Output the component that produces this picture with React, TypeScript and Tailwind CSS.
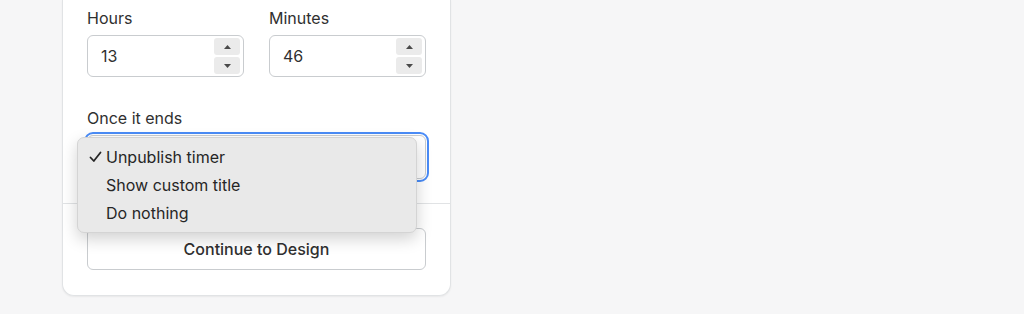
import React from 'react';

const font = { fontFamily: 'Inter, "Noto Sans", "Liberation Sans", sans-serif' };

function Spinner() {
  return (
    <div className="flex flex-col gap-[2px] pr-[3px]">
      <div className="flex h-[17px] w-[26px] items-center justify-center rounded-[3px] bg-[#ebebeb]">
        <svg width="7" height="4" viewBox="0 0 7 4">
          <path d="M0 4 L3.5 0 L7 4 Z" fill="#4a4a4a" />
        </svg>
      </div>
      <div className="flex h-[17px] w-[26px] items-center justify-center rounded-[3px] bg-[#ebebeb]">
        <svg width="7" height="4" viewBox="0 0 7 4">
          <path d="M0 0 L3.5 4 L7 0 Z" fill="#4a4a4a" />
        </svg>
      </div>
    </div>
  );
}

function NumberField({ label, value }: { label: string; value: string }) {
  return (
    <div>
      <div className="mb-[7px] text-[16px] leading-[20px] text-[#303030]">{label}</div>
      <div className="flex h-[42px] items-center justify-between rounded-[6px] border border-[#c9cccf] bg-white">
        <span className="pl-[13px] text-[16px] text-[#303030]">{value}</span>
        <Spinner />
      </div>
    </div>
  );
}

const options = ['Unpublish timer', 'Show custom title', 'Do nothing'];

export default function App() {
  return (
    <div className="min-h-[314px] bg-[#f6f6f7] pl-[62px]" style={font}>
      <div className="w-[389px] rounded-b-[12px] border border-t-0 border-[#e1e3e5] bg-white shadow-[0_1px_2px_rgba(0,0,0,0.06)]">
        <div className="px-[24px] pb-[24px] pt-[8px]">
          <div className="grid grid-cols-2 gap-[25px]">
            <NumberField label="Hours" value="13" />
            <NumberField label="Minutes" value="46" />
          </div>

          <div className="mt-[31px] mb-[7px] text-[16px] leading-[20px] text-[#303030]">Once it ends</div>
          <div className="relative">
            <div className="h-[44px] rounded-[6px] border border-[#c9cccf] bg-white outline-2 outline-offset-1 outline-[#4a8cf7]" />

            {/* open native-style menu */}
            <div className="absolute left-[-10px] top-[2px] z-10 w-[340px] rounded-[7px] border border-[#d4d4d4] bg-[#e9e9e9] pb-[5px] pt-[5px] shadow-[0_6px_16px_rgba(0,0,0,0.18)]">
              {options.map((opt, i) => (
                <div key={opt} className="flex h-[28px] items-center text-[16px] text-[#262626]">
                  <span className="flex w-[28px] justify-start pl-[11px]">
                    {i === 0 && (
                      <svg width="13" height="12" viewBox="0 0 13 12">
                        <path d="M1.5 6.5 L4.8 10 L11.5 1.5" fill="none" stroke="#262626" strokeWidth="1.8" strokeLinecap="round" strokeLinejoin="round" />
                      </svg>
                    )}
                  </span>
                  <span>{opt}</span>
                </div>
              ))}
            </div>
          </div>
        </div>

        <div className="border-t border-[#e1e3e5] px-[24px] pb-[25px] pt-[24px]">
          <button className="flex h-[42px] w-full items-center justify-center rounded-[6px] border border-[#c9cccf] bg-white text-[16px] font-medium text-[#303030]">
            Continue to Design
          </button>
        </div>
      </div>
    </div>
  );
}
